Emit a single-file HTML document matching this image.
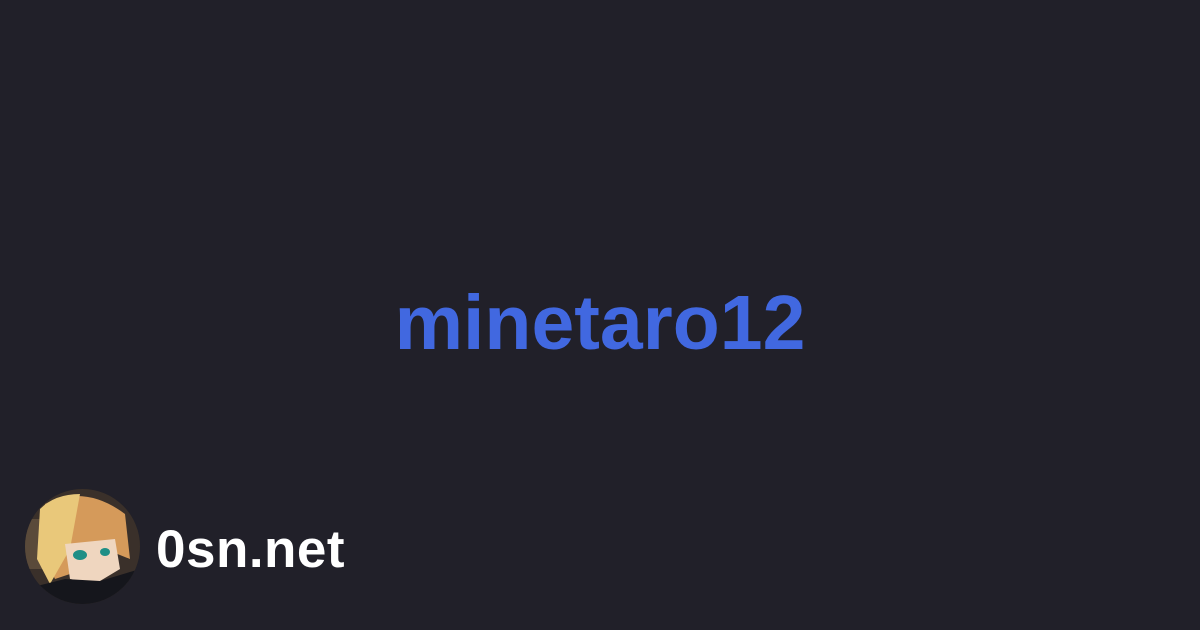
<!DOCTYPE html>
<html><head><style>
html,body{margin:0;padding:0}
body{width:1200px;height:630px;background:#212029;position:relative;overflow:hidden;font-family:"Liberation Sans",sans-serif}
.t{position:absolute;left:0;width:1200px;top:278px;text-align:center;font-size:77px;font-weight:bold;color:#4168e0;line-height:90px}
.av{position:absolute;left:25px;top:489px;width:115px;height:115px;border-radius:50%;overflow:hidden;background:#2a2522}
.s{position:absolute;left:156px;top:520px;font-size:53px;font-weight:bold;color:#fff;line-height:60px;letter-spacing:0.5px}
</style></head><body>
<div class="t">minetaro12</div>
<div class="av"><svg width="115" height="115" viewBox="0 0 115 115">
<rect width="115" height="115" fill="#3a302a"/>
<rect x="0" y="30" width="30" height="50" fill="#5a4a3a"/>
<path d="M20 15 Q60 -5 100 25 L105 70 L80 60 L60 80 L30 90 L15 60 Z" fill="#d59a5a"/>
<path d="M15 20 Q30 5 55 5 L45 60 L25 95 L12 70 Z" fill="#e9c87a"/>
<path d="M40 55 L90 50 L95 80 L70 95 L45 90 Z" fill="#efd6bf"/>
<ellipse cx="55" cy="66" rx="7" ry="5" fill="#1f8f86"/>
<ellipse cx="80" cy="63" rx="5" ry="4" fill="#1f8f86"/>
<path d="M0 100 L40 90 L75 92 L115 80 L115 115 L0 115 Z" fill="#15161c"/>
</svg></div>
<div class="s">0sn.net</div>
</body></html>
